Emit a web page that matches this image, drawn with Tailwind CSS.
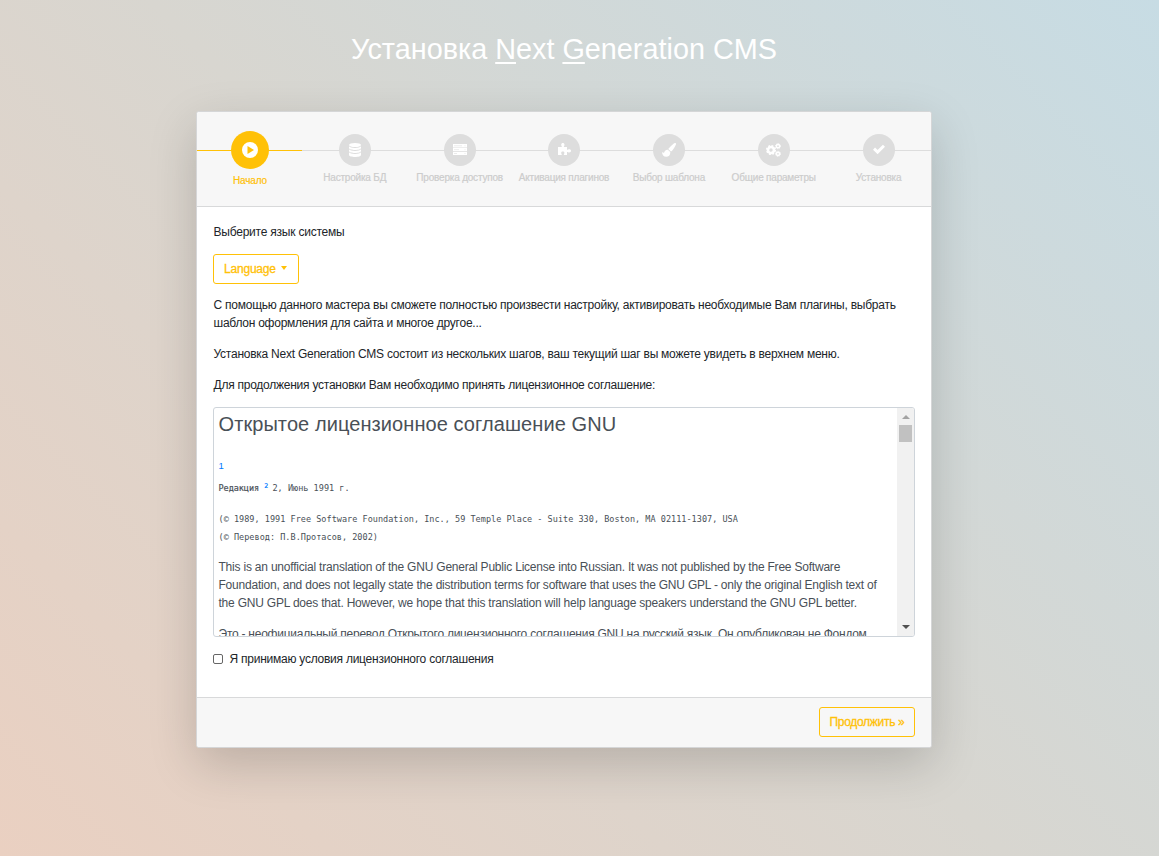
<!DOCTYPE html>
<html lang="ru">
<head>
<meta charset="utf-8">
<title>Установка Next Generation CMS</title>
<script src="https://cdn.jsdelivr.net/npm/@tailwindcss/browser@4"></script>
</head>
<body class="h-[856px] overflow-hidden bg-[linear-gradient(45deg,#ead0c1_0%,#d8d6d0_50%,#c7dce4_100%)] font-['Liberation_Sans',Arial,sans-serif] text-xs leading-[18px] text-[#212529]">
<div class="ml-[196px] w-[736px]">
  <h1 class="pt-8 text-center text-[28.8px] leading-[34px] text-white"><span class="inline-block">Установка <u class="underline decoration-2 underline-offset-[3px]">N</u>ext <u class="underline decoration-2 underline-offset-[3px]">G</u>eneration CMS</span></h1>
  <main class="mt-[45px] flex h-[637px] flex-col overflow-hidden rounded-[3px] border border-[#d5d6d7] bg-white shadow-[0_16px_48px_rgba(0,0,0,0.175)]">
    <ol class="grid h-[95px] shrink-0 grid-cols-7 border-b border-[#d8d9da] bg-[#f7f7f7] text-[10px] leading-[15px] tracking-[-0.2px] text-[#cccccc] [-webkit-text-stroke:0.2px_currentColor]">
      <li class="relative flex flex-col items-center pt-[19px] pl-px text-[#ffc107]">
        <i class="absolute inset-x-0 top-[38px] h-px bg-[#ffc107]"></i>
        <b class="relative flex size-[38px] items-center justify-center rounded-full bg-[#ffc107]"><svg class="mb-px size-4" viewBox="0 0 16 16"><circle cx="8" cy="8" r="8" fill="#fff"/><path d="M5.500 4v8l6.500-4z" fill="#ffc107"/></svg></b>
        <span class="mt-1 whitespace-nowrap">Начало</span>
      </li>
      <li class="relative flex flex-col items-center pt-[22px] pl-px">
        <i class="absolute inset-x-0 top-[38px] h-px bg-[#dddddd]"></i>
        <b class="relative flex size-8 items-center justify-center rounded-full bg-[#dddddd]"><svg class="mb-px h-[14px] w-3" viewBox="0 0 12 14" fill="#fff"><ellipse cx="6" cy="2" rx="6" ry="2"/><path d="M0 3.300C1 4.600 3 5 6 5s5-.4 6-1.700V5C12 6.300 9 7 6 7S0 6.300 0 5zM0 6.300C1 7.600 3 8 6 8s5-.4 6-1.700V8c0 1.300-3 2-6 2s-6-.7-6-2zM0 9.300C1 10.600 3 11 6 11s5-.4 6-1.700V12c0 1.300-3 2-6 2s-6-.7-6-2z"/></svg></b>
        <span class="mt-1 whitespace-nowrap">Настройка БД</span>
      </li>
      <li class="relative flex flex-col items-center pt-[22px] pl-px">
        <i class="absolute inset-x-0 top-[38px] h-px bg-[#dddddd]"></i>
        <b class="relative flex size-8 items-center justify-center rounded-full bg-[#dddddd]"><svg class="mb-0.5 h-[11px] w-[14px]" viewBox="0 0 14 11"><path d="M0 0h14v3.600H0zM0 4h14v3.300H0zM0 8h14v3H0z" fill="#fff"/><path d="M1 1.800h8M1 5.700h5M1 9.500h3M11.500 1.800h1M11.500 5.700h1M11.500 9.500h1" stroke="#e6e6e6" stroke-width=".8"/></svg></b>
        <span class="mt-1 whitespace-nowrap">Проверка доступов</span>
      </li>
      <li class="relative flex flex-col items-center pt-[22px]">
        <i class="absolute inset-x-0 top-[38px] h-px bg-[#dddddd]"></i>
        <b class="relative flex size-8 items-center justify-center rounded-full bg-[#dddddd]"><svg class="mb-0.5 ml-px h-3 w-[13px]" viewBox="0 0 13 12" fill="#fff"><path d="M0 4h3.800C4 3.300 3.200 2.900 3.200 1.700 3.200.7 3.900 0 4.800 0s1.700.7 1.700 1.700C6.500 2.900 5.700 3.300 5.900 4H9v2.700c.9.200 1.100-.5 2.200-.5 1.100 0 1.800.7 1.800 1.600s-.7 1.700-1.800 1.700c-1.100 0-1.300-.7-2.200-.5V12H5.900c-.3-.8.500-1.200.5-2.100 0-.8-.7-1.300-1.600-1.300s-1.600.5-1.600 1.300c0 .9.800 1.300.5 2.100H0z"/></svg></b>
        <span class="mt-1 whitespace-nowrap">Активация плагинов</span>
      </li>
      <li class="relative flex flex-col items-center pt-[22px]">
        <i class="absolute inset-x-0 top-[38px] h-px bg-[#dddddd]"></i>
        <b class="relative flex size-8 items-center justify-center rounded-full bg-[#dddddd]"><svg class="mb-px size-[14px]" viewBox="0 0 14 14" fill="#fff"><path d="M13.800.3c.5.600.1 1.500-.6 2.700-1.200 2.200-2.700 4.700-4.200 5.600L6.200 6.100C8 3.800 10 1.900 11.800.5c.8-.6 1.600-.7 2-.2zM5.800 6.800l2.500 2.300c.2 3-1.600 4.700-4.100 4.700C1.500 13.800.2 12 0 9c.8.500 1.500 1.200 2.200.5.700-1.900 2-3 3.600-2.700z"/></svg></b>
        <span class="mt-1 whitespace-nowrap">Выбор шаблона</span>
      </li>
      <li class="relative flex flex-col items-center pt-[22px]">
        <i class="absolute inset-x-0 top-[38px] h-px bg-[#dddddd]"></i>
        <b class="relative flex size-8 items-center justify-center rounded-full bg-[#dddddd]"><svg class="mb-px h-[14px] w-[15px]" viewBox="0 0 15 14" fill="none" stroke="#fff"><circle cx="5" cy="7" r="3" stroke-width="2.600"/><circle cx="5" cy="7" r="4.400" stroke-width="1.300" stroke-dasharray="1.900 1.556"/><circle cx="12" cy="3.200" r="1.600" stroke-width="1.500"/><circle cx="12" cy="3.200" r="2.500" stroke-width="1" stroke-dasharray="1.100 .863"/><circle cx="12" cy="10.800" r="1.600" stroke-width="1.500"/><circle cx="12" cy="10.800" r="2.500" stroke-width="1" stroke-dasharray="1.100 .863"/></svg></b>
        <span class="mt-1 whitespace-nowrap">Общие параметры</span>
      </li>
      <li class="relative flex flex-col items-center pt-[22px]">
        <i class="absolute inset-x-0 top-[38px] h-px bg-[#dddddd]"></i>
        <b class="relative flex size-8 items-center justify-center rounded-full bg-[#dddddd]"><svg class="mb-0.5 h-[10px] w-3" viewBox="0 0 12 10"><path d="M1 4.600l3.600 3.500L11 1.700" fill="none" stroke="#fff" stroke-width="3"/></svg></b>
        <span class="mt-1 whitespace-nowrap">Установка</span>
      </li>
    </ol>
    <section class="flex-1 px-4 pt-4 tracking-[-0.245px]">
      <p class="pl-[0.5px] tracking-[-0.22px]">Выберите язык системы</p>
      <button class="mt-[13px] flex h-[30px] w-[86px] items-center rounded-[3px] border border-[#ffc107] pl-[10px] tracking-[-0.2px] text-[#ffc107] [-webkit-text-stroke:0.3px_#ffc107]">Language<span class="mb-[3px] ml-[5px] border-x-[3.500px] border-t-4 border-x-transparent border-t-[#ffc107]"></span></button>
      <p class="mt-3 pl-[0.5px]">С помощью данного мастера вы сможете полностью произвести настройку, активировать необходимые Вам плагины, выбрать<br>шаблон оформления для сайта и многое другое...</p>
      <p class="mt-[13px] pl-[0.5px]">Установка Next Generation CMS состоит из нескольких шагов, ваш текущий шаг вы можете увидеть в верхнем меню.</p>
      <p class="mt-[13px] pl-[0.5px]">Для продолжения установки Вам необходимо принять лицензионное соглашение:</p>
      <div class="mt-[13px] flex h-[230px] overflow-hidden rounded-[3px] border border-[#ced4da] text-[#495057]">
        <div class="flex-1 overflow-hidden whitespace-nowrap pl-[4.500px]">
          <h2 class="pt-1 text-[20px] leading-6 tracking-[0.08px]">Открытое лицензионное соглашение GNU</h2>
          <p class="mt-[21px] text-[9.600px] text-[#007bff]">1</p>
          <div class="font-['DejaVu_Sans_Mono',monospace] text-[8.500px] tracking-[0.025px]">
            <p class="mt-1"><span class="tracking-[-0.050px] [-webkit-text-stroke:0.2px_currentColor]">Редакция</span> <sup class="text-[6.500px] leading-none tracking-[-0.8px] text-[#007bff] [-webkit-text-stroke:0.2px_#007bff]">2</sup> 2, Июнь 1991 г.</p>
            <p class="mt-[13px]">(© 1989, 1991 Free Software Foundation, Inc., 59 Temple Place - Suite 330, Boston, MA 02111-1307, USA</p>
            <p>(© Перевод: П.В.Протасов, 2002)</p>
          </div>
          <p class="mt-3 tracking-[-0.210px]">This is an unofficial translation of the GNU General Public License into Russian. It was not published by the Free Software<br>Foundation, and does not legally state the distribution terms for software that uses the GNU GPL - only the original English text of<br>the GNU GPL does that. However, we hope that this translation will help language speakers understand the GNU GPL better.</p>
          <p class="mt-[13px]">Это - неофициальный перевод Открытого лицензионного соглашения GNU на русский язык. Он опубликован не Фондом</p>
        </div>
        <div class="flex w-[17px] shrink-0 flex-col items-center bg-[#f1f1f1]">
          <span class="mt-[7px] border-x-4 border-b-4 border-x-transparent border-b-[#a3a3a3]"></span>
          <span class="mt-[6px] h-[17px] w-[13px] bg-[#c1c1c1]"></span>
          <span class="mt-auto mb-[7px] border-x-4 border-t-4 border-x-transparent border-t-[#505050]"></span>
        </div>
      </div>
      <label class="mt-[13px] flex items-center"><input type="checkbox" class="mr-[6.500px] size-[10px] appearance-none rounded-[2px] border border-[#666]">Я принимаю условия лицензионного соглашения</label>
    </section>
    <footer class="flex h-[50px] shrink-0 items-start justify-end border-t border-[#d8d9da] bg-[#f7f7f7] pt-[9px] pr-4">
      <button class="flex h-[30px] w-24 items-center justify-center rounded-[3px] border border-[#ffc107] tracking-[-0.3px] text-[#ffc107] [-webkit-text-stroke:0.3px_#ffc107]">Продолжить »</button>
    </footer>
  </main>
</div>
</body>
</html>
